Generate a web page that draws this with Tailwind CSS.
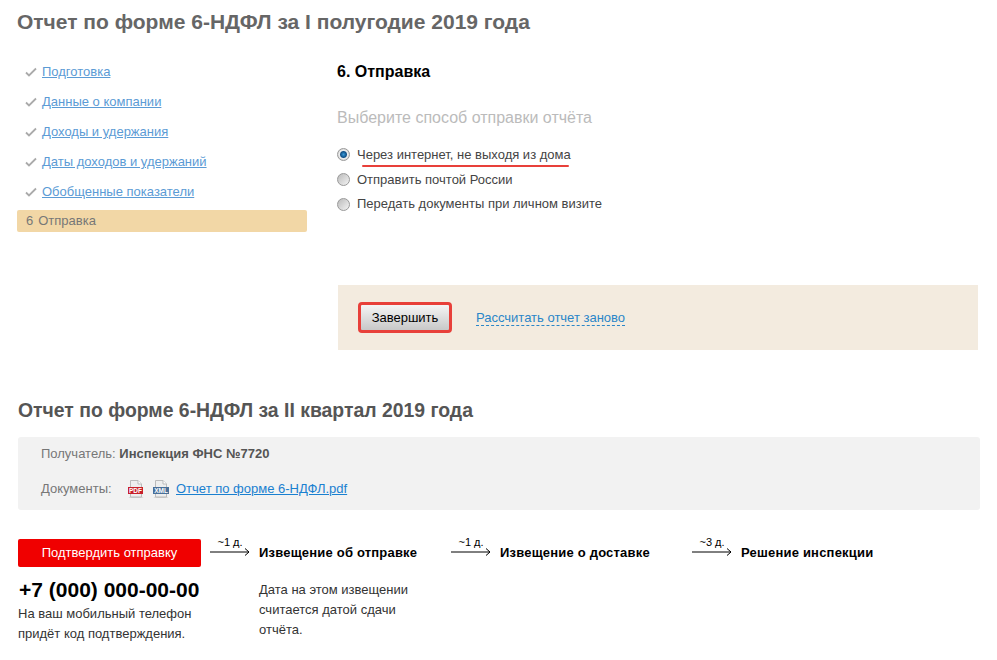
<!DOCTYPE html>
<html lang="ru">
<head>
    <meta charset="UTF-8">
    <title>Отчет по форме 6-НДФЛ</title>
    <script src="https://cdn.jsdelivr.net/npm/@tailwindcss/browser@4"></script>
</head>
<body class="bg-white font-['Liberation_Sans',Arial,sans-serif] text-[13px] text-[#444] w-[997px] h-[660px] overflow-hidden">
    <div class="pl-[17px] pr-[17px]">
        <h1 class="pt-[10px] h-[50px] text-[21px] leading-[23px] font-bold text-[#666]">Отчет по форме 6-НДФЛ за I полугодие 2019 года</h1>

        <div class="flex">
            <ul class="w-[290px] mr-[30px] pt-[7px] text-[#777]">
                <li class="flex items-center h-[30px] pl-[8px]">
                    <svg class="w-[12px] h-[10px] mr-[5px]" viewBox="0 0 12 10"><path d="M1 5.5L4 8.5L11 1.5" fill="none" stroke="#aaa" stroke-width="1.8"/></svg>
                    <a class="text-[#5b9bd5] underline">Подготовка</a>
                </li>
                <li class="flex items-center h-[30px] pl-[8px]">
                    <svg class="w-[12px] h-[10px] mr-[5px]" viewBox="0 0 12 10"><path d="M1 5.5L4 8.5L11 1.5" fill="none" stroke="#aaa" stroke-width="1.8"/></svg>
                    <a class="text-[#5b9bd5] underline">Данные о компании</a>
                </li>
                <li class="flex items-center h-[30px] pl-[8px]">
                    <svg class="w-[12px] h-[10px] mr-[5px]" viewBox="0 0 12 10"><path d="M1 5.5L4 8.5L11 1.5" fill="none" stroke="#aaa" stroke-width="1.8"/></svg>
                    <a class="text-[#5b9bd5] underline">Доходы и удержания</a>
                </li>
                <li class="flex items-center h-[30px] pl-[8px]">
                    <svg class="w-[12px] h-[10px] mr-[5px]" viewBox="0 0 12 10"><path d="M1 5.5L4 8.5L11 1.5" fill="none" stroke="#aaa" stroke-width="1.8"/></svg>
                    <a class="text-[#5b9bd5] underline">Даты доходов и удержаний</a>
                </li>
                <li class="flex items-center h-[30px] pl-[8px]">
                    <svg class="w-[12px] h-[10px] mr-[5px]" viewBox="0 0 12 10"><path d="M1 5.5L4 8.5L11 1.5" fill="none" stroke="#aaa" stroke-width="1.8"/></svg>
                    <a class="text-[#5b9bd5] underline">Обобщенные показатели</a>
                </li>
                <li class="flex items-center h-[22px] mt-[3px] pl-[9px] bg-[#f2d7a6] rounded-[2px]">
                    <span class="mr-[5px]">6</span>Отправка
                </li>
            </ul>

            <div class="flex-1">
                <h2 class="h-[59px] pt-[14px] text-[16px] leading-[16px] font-bold text-black">6. Отправка</h2>
                <p class="h-[33px] text-[16px] leading-[18px] text-[#bbb]">Выберите способ отправки отчёта</p>
                <div class="relative flex items-center h-[25px]">
                    <input type="radio" name="send" checked class="appearance-none w-[13px] h-[13px] mr-[7px] rounded-full border border-[#999] bg-[radial-gradient(circle,#3a9ad9_0%,#0f4f86_38%,#eee_52%,#bbb_100%)]">
                    Через интернет, не выходя из дома
                    <span class="absolute left-[25px] top-[23px] w-[207px] h-[2px] bg-[#e8403a] rounded-full"></span>
                </div>
                <div class="flex items-center h-[25px]">
                    <input type="radio" name="send" class="appearance-none w-[13px] h-[13px] mr-[7px] rounded-full border border-[#999] bg-gradient-to-br from-[#bbb] to-[#f4f4f4]">
                    Отправить почтой России
                </div>
                <div class="flex items-center h-[24px]">
                    <input type="radio" name="send" class="appearance-none w-[13px] h-[13px] mr-[7px] rounded-full border border-[#999] bg-gradient-to-br from-[#bbb] to-[#f4f4f4]">
                    Передать документы при личном визите
                </div>
            </div>
        </div>

        <div class="ml-[321px] mt-[53px] mr-[2px] h-[65px] bg-[#f3ebdf] flex items-center pl-[20px]">
            <button class="w-[94px] h-[31px] border-[3px] border-[#e8403a] rounded-[4px] bg-gradient-to-b from-[#f5f5f5] to-[#c8c8c8] text-black text-[13px]">Завершить</button>
            <a class="ml-[24px] mt-[1px] text-[#2a86c8] border-b border-dashed border-[#2a86c8] leading-[14px]">Рассчитать отчет заново</a>
        </div>

        <h2 class="mt-[50px] ml-[1px] h-[37px] text-[19.4px] leading-[21px] font-bold text-[#555]">Отчет по форме 6-НДФЛ за II квартал 2019 года</h2>

        <div class="ml-[1px] w-[962px] h-[73px] pt-[1px] bg-[#f2f2f2] rounded-[3px] pl-[23px] text-[#777]">
            <div class="flex items-center h-[32px]">Получатель:&nbsp;<b class="text-[#555]">Инспекция ФНС №7720</b></div>
            <div class="flex items-center h-[38px]">
                <span class="w-[86px]">Документы:</span>
                <svg class="w-[18px] h-[18px] mr-[7px]" viewBox="0 0 18 18">
                    <ellipse cx="9" cy="17.2" rx="7.5" ry=".8" fill="#ccc"/>
                    <path d="M3.5 .5H11L14.5 4V17H3.5Z" fill="#eee" stroke="#bbb"/>
                    <path d="M11 .5V4H14.5" fill="#fff" stroke="#bbb"/>
                    <rect x="1" y="7" width="15" height="7" fill="#c8202a"/>
                    <text x="8.5" y="13" text-anchor="middle" font-size="6.5" font-weight="bold" fill="#fff">PDF</text>
                </svg>
                <svg class="w-[18px] h-[18px] mr-[6px]" viewBox="0 0 18 18">
                    <ellipse cx="9" cy="17.2" rx="7.5" ry=".8" fill="#ccc"/>
                    <path d="M3.5 .5H11L14.5 4V17H3.5Z" fill="#eee" stroke="#bbb"/>
                    <path d="M11 .5V4H14.5" fill="#fff" stroke="#bbb"/>
                    <rect x="1" y="7" width="16" height="7" fill="#4a7099"/>
                    <text x="9" y="13" text-anchor="middle" font-size="6.5" font-weight="bold" fill="#fff">XML</text>
                </svg>
                <a class="text-[#1a80d0] underline">Отчет по форме 6-НДФЛ.pdf</a>
            </div>
        </div>

        <div class="ml-[1px] mt-[29px] flex text-black">
            <div class="w-[183px]">
                <button class="w-[183px] h-[28px] bg-[#f00000] rounded-[2px] text-white text-[13px]">Подтвердить отправку</button>
                <div class="mt-[11px] ml-[1px] text-[21px] leading-[23px] font-bold">+7 (000) 000-00-00</div>
                <p class="mt-[3px] leading-[20px] text-[#333]">На ваш мобильный телефон<br>придёт код подтверждения.</p>
            </div>
            <div class="relative w-[58px] h-[28px]">
                <span class="absolute left-[29px] -translate-x-1/2 top-[-3px] text-[11px] leading-[13px] whitespace-nowrap">~1 д.</span>
                <svg class="absolute left-[9px] top-[9px]" width="40" height="8" viewBox="0 0 40 8"><path d="M0 4H39M35 .5L39 4L35 7.5" fill="none" stroke="#000"/></svg>
            </div>
            <div class="w-[192px]">
                <div class="h-[28px] flex items-center font-bold tracking-[.2px]">Извещение об отправке</div>
                <p class="mt-[13px] leading-[20px] text-[#333]">Дата на этом извещении<br>считается датой сдачи<br>отчёта.</p>
            </div>
            <div class="relative w-[49px] h-[28px]">
                <span class="absolute left-[20px] -translate-x-1/2 top-[-3px] text-[11px] leading-[13px] whitespace-nowrap">~1 д.</span>
                <svg class="absolute left-0 top-[9px]" width="40" height="8" viewBox="0 0 40 8"><path d="M0 4H39M35 .5L39 4L35 7.5" fill="none" stroke="#000"/></svg>
            </div>
            <div class="w-[192px] h-[28px] flex items-center font-bold tracking-[.2px]">Извещение о доставке</div>
            <div class="relative w-[49px] h-[28px]">
                <span class="absolute left-[20px] -translate-x-1/2 top-[-3px] text-[11px] leading-[13px] whitespace-nowrap">~3 д.</span>
                <svg class="absolute left-0 top-[9px]" width="40" height="8" viewBox="0 0 40 8"><path d="M0 4H39M35 .5L39 4L35 7.5" fill="none" stroke="#000"/></svg>
            </div>
            <div class="h-[28px] flex items-center font-bold tracking-[.2px]">Решение инспекции</div>
        </div>
    </div>
</body>
</html>
